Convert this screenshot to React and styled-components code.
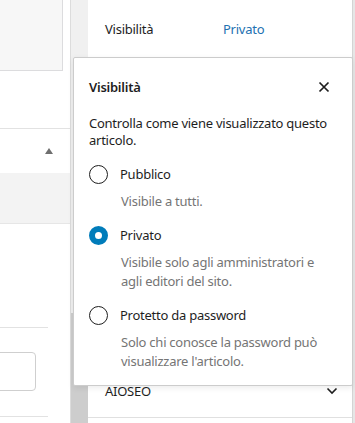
import React from 'react';
import styled, { createGlobalStyle } from 'styled-components';

const GlobalStyle = createGlobalStyle`
  html, body {
    margin: 0;
    padding: 0;
    background: #fff;
  }
  body {
    font-family: "Noto Sans", "Open Sans", sans-serif;
    font-size: 13px;
    letter-spacing: -0.25px;
    color: #1e1e1e;
  }
`;

const Page = styled.div`
  position: relative;
  display: flex;
  width: 355px;
  height: 423px;
  overflow: hidden;
`;

/* ---------- left editor area ---------- */

const LeftPane = styled.div`
  width: 70px;
  display: flex;
  flex-direction: column;
  background: #fff;
`;

const TopBox = styled.div`
  width: 63px;
  height: 71px;
  box-sizing: border-box;
  background: #f7f7f7;
  border-right: 1px solid #dcdcde;
  border-bottom: 1px solid #dcdcde;
`;

const Gap = styled.div`
  height: ${p => p.$h}px;
`;

const Rule = styled.div`
  height: 1px;
  width: ${p => p.$w || 70}px;
  background: #e2e2e2;
`;

const PanelHead = styled.div`
  height: 44px;
  display: flex;
  align-items: center;
  justify-content: flex-end;
  padding-right: 17px;
`;

const Caret = styled.span`
  width: 0;
  height: 0;
  border-left: 4px solid transparent;
  border-right: 4px solid transparent;
  border-bottom: 6px solid #6f6f6f;
`;

const GreyBlock = styled.div`
  height: 50px;
  background: #f3f3f3;
  border-bottom: 1px solid #e6e6e6;
`;

const InputBox = styled.div`
  width: 40px;
  height: 39px;
  margin-left: -4px;
  box-sizing: border-box;
  border: 1px solid #cfcfcf;
  border-radius: 4px;
`;

/* ---------- scrollbars ---------- */

const ScrollTrack = styled.div`
  width: 18px;
  box-sizing: border-box;
  border-left: 1px solid #dcdcdc;
  background: #f0f0f0;
  display: flex;
  flex-direction: column;
  justify-content: flex-end;
`;

const ScrollThumb = styled.div`
  height: 110px;
  background: #cdcdcd;
`;

const EdgeBar = styled.div`
  width: 3px;
  box-sizing: border-box;
  border-left: 1px solid #d4d4d4;
  background: #e6e6e6;
`;

/* ---------- sidebar ---------- */

const Sidebar = styled.div`
  width: 264px;
  display: flex;
  flex-direction: column;
  background: #fff;
`;

const SideRow = styled.div`
  display: flex;
  align-items: center;
  height: ${p => p.$h}px;
  padding: 0 14px 0 17px;
  border-bottom: ${p => (p.$line ? '1px solid #e0e0e0' : 'none')};
`;

const SideLabel = styled.span`
  width: 118px;
`;

const SideLink = styled.span`
  color: #2271b1;
`;

const Fill = styled.div`
  flex: 1;
`;

const RowTitle = styled.span`
  flex: 1;
`;

/* ---------- popover ---------- */

const Popover = styled.div`
  position: absolute;
  left: 73px;
  top: 57px;
  width: 280px;
  height: 329px;
  box-sizing: border-box;
  background: #fff;
  border: 1px solid #cccccc;
  border-radius: 2px;
  box-shadow: 0 2px 6px rgba(0, 0, 0, 0.08);
  padding: 0 16px 15px 15px;
`;

const PopHead = styled.div`
  height: 57px;
  display: flex;
  align-items: center;
  justify-content: space-between;
`;

const PopTitle = styled.h2`
  margin: 0;
  font-size: 13px;
  font-weight: 600;
`;

const CloseBtn = styled.button`
  border: 0;
  background: none;
  padding: 0;
  margin-right: 6px;
  display: flex;
  color: #1e1e1e;
`;

const Intro = styled.p`
  margin: 0;
  line-height: 17px;
`;

const Option = styled.div`
  margin-top: ${p => p.$top}px;
`;

const OptionRow = styled.label`
  display: flex;
  align-items: center;
  gap: 12px;
  height: 20px;
`;

const Radio = styled.span`
  width: 19px;
  height: 19px;
  box-sizing: border-box;
  border-radius: 50%;
  border: ${p => (p.$checked ? '6px solid #007cba' : '1px solid #1e1e1e')};
  background: #fff;
`;

const OptionDesc = styled.p`
  margin: 8px 0 0 32px;
  color: #757575;
  line-height: 19px;
`;

const options = [
  { label: 'Pubblico', desc: 'Visibile a tutti.', top: 15 },
  { label: 'Privato', desc: 'Visibile solo agli amministratori e agli editori del sito.', checked: true, top: 14 },
  { label: 'Protetto da password', desc: "Solo chi conosce la password può visualizzare l'articolo.", top: 14 },
];

const App = () => {
  return (
    <>
      <GlobalStyle />
      <Page>
        <LeftPane>
          <TopBox />
          <Gap $h={57} />
          <Rule />
          <PanelHead>
            <Caret />
          </PanelHead>
          <GreyBlock />
          <Gap $h={103} />
          <Rule $w={48} />
          <Gap $h={24} />
          <InputBox />
          <Gap $h={25} />
          <Rule $w={48} />
        </LeftPane>

        <ScrollTrack>
          <ScrollThumb />
        </ScrollTrack>

        <Sidebar>
          <SideRow $h={57}>
            <SideLabel>Visibilità</SideLabel>
            <SideLink>Privato</SideLink>
          </SideRow>
          <Fill />
          <SideRow $h={52} $line>
            <RowTitle>AIOSEO</RowTitle>
            <svg width="12" height="8" viewBox="0 0 12 8">
              <path d="M1.5 1.5 L6 6 L10.5 1.5" fill="none" stroke="#1e1e1e" strokeWidth="1.6" />
            </svg>
          </SideRow>
          <Gap $h={5} />
        </Sidebar>

        <EdgeBar />

        <Popover>
          <PopHead>
            <PopTitle>Visibilità</PopTitle>
            <CloseBtn aria-label="Chiudi">
              <svg width="12" height="12" viewBox="0 0 12 12">
                <path d="M1.5 1.5 L10.5 10.5 M10.5 1.5 L1.5 10.5" stroke="#1e1e1e" strokeWidth="1.7" />
              </svg>
            </CloseBtn>
          </PopHead>
          <Intro>Controlla come viene visualizzato questo articolo.</Intro>
          {options.map(o => (
            <Option key={o.label} $top={o.top}>
              <OptionRow>
                <Radio $checked={o.checked} />
                {o.label}
              </OptionRow>
              <OptionDesc>{o.desc}</OptionDesc>
            </Option>
          ))}
        </Popover>
      </Page>
    </>
  );
};

export default App;
